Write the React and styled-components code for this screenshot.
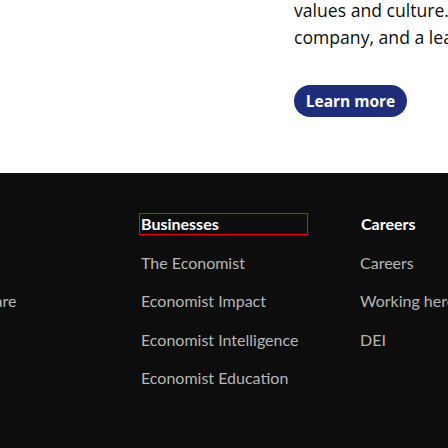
import React from "react";
import styled, { createGlobalStyle } from "styled-components";

const GlobalStyle = createGlobalStyle`
  html, body {
    margin: 0;
    padding: 0;
    background: #0d0d0d;
    overflow: hidden;
  }
  body {
    width: 448px;
    height: 448px;
  }
`;

const Page = styled.div`
  width: 448px;
  height: 448px;
  overflow: hidden;
  display: flex;
  flex-direction: column;
`;

const Promo = styled.section`
  height: 173px;
  flex-shrink: 0;
  background: #ffffff;
  padding-left: 294px;
  box-sizing: border-box;
  overflow: hidden;
`;

const PromoText = styled.p`
  margin: -3px 0 0 0;
  font-family: "Open Sans", "Noto Sans", sans-serif;
  font-size: 17.6px;
  line-height: 26.5px;
  color: #0d0d0d;
  white-space: nowrap;
`;

const LearnButton = styled.a`
  display: inline-flex;
  align-items: center;
  justify-content: center;
  margin-top: 35px;
  width: 113px;
  height: 32px;
  border-radius: 16px;
  background: #1f2e7a;
  color: #ffffff;
  font-family: "Open Sans", "Noto Sans", sans-serif;
  font-weight: 700;
  font-size: 15.5px;
  text-decoration: none;
`;

const Footer = styled.footer`
  flex: 1;
  background: #0d0d0d;
  padding-top: 40px;
  overflow: hidden;
`;

const Columns = styled.div`
  display: grid;
  grid-template-columns: 223px 219px 219px;
  margin-left: -82px;
`;

const Column = styled.ul`
  list-style: none;
  margin: 0;
  padding: 0;
  display: flex;
  flex-direction: column;
  gap: 16.5px;
  font-family: Lato, "Liberation Sans", sans-serif;
  font-size: 16px;
  line-height: 22px;
`;

const Heading = styled.li`
  width: 169px;
  font-weight: 700;
  color: #ffffff;
  white-space: nowrap;
  box-sizing: border-box;
  border: 1px solid ${(p) => (p.$focused ? "#e3120b" : "transparent")};
  margin-left: ${(p) => (p.$focused ? "-2px" : "0")};
  padding-left: ${(p) => (p.$focused ? "1px" : "0")};
  line-height: 20px;
`;

const Item = styled.li`
  color: #b6b6b6;
  white-space: nowrap;
`;

const columns = [
  {
    title: "About",
    items: ["Media", "Where we are"],
  },
  {
    title: "Businesses",
    focused: true,
    items: [
      "The Economist",
      "Economist Impact",
      "Economist Intelligence",
      "Economist Education",
    ],
  },
  {
    title: "Careers",
    items: ["Careers", "Working here", "DEI"],
  },
];

export default function App() {
  return (
    <>
      <GlobalStyle />
      <Page>
        <Promo>
          <PromoText>
            values and culture. We are a global
            <br />
            company, and a leader in
          </PromoText>
          <LearnButton href="#">Learn more</LearnButton>
        </Promo>
        <Footer>
          <Columns>
            {columns.map((col) => (
              <Column key={col.title}>
                <Heading $focused={col.focused}>{col.title}</Heading>
                {col.items.map((item) => (
                  <Item key={item}>{item}</Item>
                ))}
              </Column>
            ))}
          </Columns>
        </Footer>
      </Page>
    </>
  );
}
